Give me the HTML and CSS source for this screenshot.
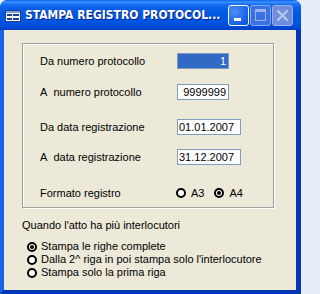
FILE: index.html
```html
<!DOCTYPE html>
<html>
<head>
<meta charset="utf-8">
<link rel="stylesheet" href="styles.css">
</head>
<body>
<div class="window">
  <div class="titlebar">
    <svg class="appicon" width="16" height="16" viewBox="0 0 16 16">
      <rect x="0.5" y="2.5" width="15" height="11" fill="#fff" stroke="#1c3f94"/>
      <rect x="1" y="3" width="14" height="2" fill="#7f9fd8"/>
      <rect x="2" y="6" width="5" height="2" fill="#1c3f94"/>
      <rect x="8" y="6" width="6" height="2" fill="#1c3f94"/>
      <rect x="2" y="10" width="5" height="2" fill="#1c3f94"/>
      <rect x="8" y="10" width="6" height="2" fill="#1c3f94"/>
    </svg>
    <span class="title">STAMPA REGISTRO PROTOCOL...</span>
    <div class="buttons">
      <div class="btn btn-min"><span class="min-glyph"></span></div>
      <div class="btn btn-max dis"><span class="max-glyph"></span></div>
      <div class="btn btn-close dis">
        <svg width="13" height="13" viewBox="0 0 13 13"><path d="M2 2 L11 11 M11 2 L2 11" stroke="#b9c6ee" stroke-width="2.2" stroke-linecap="round"/></svg>
      </div>
    </div>
  </div>
  <div class="client">
    <div class="frame">
      <div class="row">
        <span class="label">Da numero protocollo</span>
        <span class="box narrow sel right">1</span>
      </div>
      <div class="row r2">
        <span class="label">A&nbsp; numero protocollo</span>
        <span class="box narrow right">9999999</span>
      </div>
      <div class="row r3">
        <span class="label">Da data registrazione</span>
        <span class="box wide">01.01.2007</span>
      </div>
      <div class="row r4">
        <span class="label">A&nbsp; data registrazione</span>
        <span class="box wide">31.12.2007</span>
      </div>
      <div class="row r5">
        <span class="label">Formato registro</span>
        <span class="radios">
          <span class="opt"><span class="radio"></span>A3</span>
          <span class="opt"><span class="radio on"></span>A4</span>
        </span>
      </div>
    </div>
    <div class="question">Quando l'atto ha più interlocutori</div>
    <div class="list">
      <div class="item"><span class="radio on"></span>Stampa le righe complete</div>
      <div class="item"><span class="radio"></span>Dalla 2^ riga in poi stampa solo l'interlocutore</div>
      <div class="item"><span class="radio"></span>Stampa solo la prima riga</div>
    </div>
  </div>
</div>
</body>
</html>
```

FILE: styles.css
```css
html, body {
  margin: 0;
  padding: 0;
  background: #e8eef8;
}
body {
  width: 301px;
  height: 294px;
  overflow: hidden;
  font-family: "Liberation Sans", Arial, sans-serif;
}
.window {
  width: 301px;
  height: 294px;
  box-sizing: border-box;
  display: flex;
  flex-direction: column;
  background: #0a54dc;
  border-radius: 8px 8px 0 0;
}
.titlebar {
  height: 30px;
  flex: none;
  display: flex;
  align-items: center;
  padding: 0 0 0 5px;
  border-radius: 7px 7px 0 0;
  background: linear-gradient(to bottom, #0a5bef 0, #3d95ff 2px, #1a72f5 4px, #0a5fe8 8px, #0058e4 14px, #0055e0 22px, #0049d4 27px, #003ec8 30px);
  color: #fff;
}
.appicon {
  flex: none;
  margin-top: 1px;
}
.title {
  margin-left: 4px;
  font-family: "DejaVu Sans Condensed", "DejaVu Sans", sans-serif;
  font-weight: bold;
  font-size: 12px;
  text-shadow: 1px 1px 0 #0a1e8c;
  white-space: nowrap;
  flex: none;
}
.buttons {
  display: flex;
  gap: 1px;
  margin-left: auto;
  margin-right: 8px;
}
.btn {
  width: 21px;
  height: 21px;
  box-sizing: border-box;
  border: 1px solid #fff;
  border-radius: 3px;
  background: radial-gradient(circle at 30% 30%, #4f8ff8, #1660ea 70%, #0b4dd8);
  display: flex;
  align-items: center;
  justify-content: center;
}
.btn.dis {
  border-color: #8aa6ee;
  background: #3a72e6;
}
.btn-close.dis {
  background: #6f8ddd;
  border-color: #9bb0ea;
}
.min-glyph {
  width: 7px;
  height: 3px;
  background: #fff;
  margin-top: 8px;
  margin-right: 3px;
}
.max-glyph {
  width: 9px;
  height: 8px;
  border: 1px solid #9bb4f0;
  border-top-width: 3px;
}
.client {
  flex: 1;
  background: #ece9d8;
  border-style: solid;
  border-color: #0a54dc #0036b4 #0036b4 #1a62e8;
  border-width: 0 5px 4px 4px;
  padding: 13px 0 0 18px;
  font-size: 11px;
  color: #000;
}
.frame {
  width: 252px;
  height: 165px;
  box-sizing: border-box;
  border: 1px solid #a0a0a0;
  box-shadow: inset 1px 1px 0 #fff, 1px 1px 0 #fff;
  padding: 9px 0 0 17px;
}
.row {
  display: grid;
  grid-template-columns: 137px auto;
  align-items: center;
  height: 16px;
}
.r2 { margin-top: 15px; }
.r3 { margin-top: 19px; }
.r4 { margin-top: 14px; }
.r5 { margin-top: 20px; }
.label {
  white-space: nowrap;
}
.box {
  height: 16px;
  box-sizing: border-box;
  border: 1px solid #7f9db9;
  background: #fff;
  line-height: 14px;
  padding: 0 2px 0 1px;
  white-space: nowrap;
}
.narrow { width: 52px; }
.wide { width: 64px; }
.right { text-align: right; }
.sel {
  background: #316ac5;
  color: #fff;
}
.radios {
  display: flex;
  gap: 10px;
  margin-left: -1px;
}
.opt {
  display: flex;
  align-items: center;
  gap: 5px;
}
.radio {
  width: 10px;
  height: 10px;
  box-sizing: border-box;
  border: 2px solid #000;
  border-radius: 50%;
  background: #fff;
  display: inline-flex;
  align-items: center;
  justify-content: center;
  flex: none;
}
.radio.on::after {
  content: "";
  width: 4px;
  height: 4px;
  border-radius: 50%;
  background: #000;
}
.question {
  margin-top: 11px;
  height: 13px;
  line-height: 13px;
}
.list {
  margin-top: 8px;
  padding-left: 5px;
}
.item {
  display: flex;
  align-items: center;
  gap: 4px;
  height: 13px;
  line-height: 13px;
  white-space: nowrap;
}
```
